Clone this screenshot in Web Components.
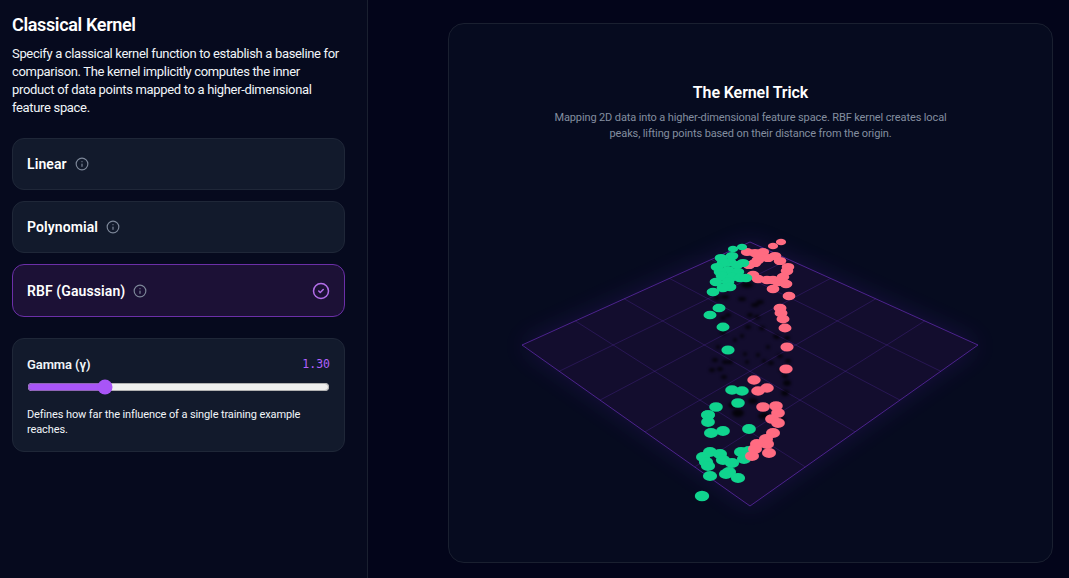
<!DOCTYPE html>
<html>
<head>
<meta charset="utf-8">
<title>Classical Kernel</title>
<style>
    html, body { margin: 0; height: 100%; background: #03051a; overflow: hidden; }
    body { font-family: Roboto, 'Noto Sans', sans-serif; color: #fff; }
</style>
</head>
<body>
<kernel-app>
    <kernel-sidebar slot="side" heading="Classical Kernel">
        <span slot="intro">Specify a classical kernel function to establish a baseline for comparison. The kernel implicitly computes the inner product of data points mapped to a higher-dimensional feature space.</span>
        <kernel-option label="Linear"></kernel-option>
        <kernel-option label="Polynomial"></kernel-option>
        <kernel-option label="RBF (Gaussian)" selected></kernel-option>
        <gamma-panel value="1.3">Defines how far the influence of a single training example reaches.</gamma-panel>
    </kernel-sidebar>
    <kernel-plot slot="main" heading="The Kernel Trick">Mapping 2D data into a higher-dimensional feature space. RBF kernel creates local peaks, lifting points based on their distance from the origin.</kernel-plot>
</kernel-app>
<script>
    class KernelApp extends HTMLElement {
        constructor() {
            super();
            this.root = this.attachShadow({ mode: 'open' });
            this.root.innerHTML = `
                <style>
                    :host { display: flex; height: 578px; width: 1069px; }
                    .side { flex: 0 0 367px; background: #060a1e; border-right: 1px solid #1a2030; }
                    .main { flex: 1; display: flex; justify-content: flex-end; padding: 23px 16px 15px 0; }
                </style>
                <div class="side"><slot name="side"></slot></div>
                <div class="main"><slot name="main"></slot></div>
            `;
        }
    }
    customElements.define('kernel-app', KernelApp);

    class KernelSidebar extends HTMLElement {
        constructor() {
            super();
            this.root = this.attachShadow({ mode: 'open' });
            this.root.innerHTML = `
                <style>
                    :host { display: block; padding: 13px 22px 0 12px; }
                    h2 { margin: 0 0 8px; font-size: 18px; line-height: 24px; font-weight: 600; letter-spacing: -0.35px; color: #fff; }
                    p { margin: 0 0 21px; max-width: 331px; font-size: 13px; line-height: 18px; letter-spacing: -0.33px; color: #f1f5f9; }
                    .list { display: flex; flex-direction: column; gap: 11px; }
                </style>
                <h2>${this.getAttribute('heading')}</h2>
                <p><slot name="intro"></slot></p>
                <div class="list"><slot></slot></div>
            `;
        }
    }
    customElements.define('kernel-sidebar', KernelSidebar);

    class KernelOption extends HTMLElement {
        constructor() {
            super();
            this.root = this.attachShadow({ mode: 'open' });
            const selected = this.hasAttribute('selected');
            this.root.innerHTML = `
                <style>
                    :host { display: flex; align-items: center; box-sizing: border-box; height: 52px; padding: 0 14px; border: 1px solid #1f2738; border-radius: 12px; background: #121a2c; }
                    :host([selected]) { height: 53px; background: #1c1136; border-color: #6b2fa8; }
                    .label { font-size: 14px; font-weight: 600; letter-spacing: 0.1px; color: #fff; }
                    .info { margin-left: 8px; display: block; color: #7d8799; }
                    .check { margin-left: auto; display: block; color: #b26ee8; }
                </style>
                <span class="label">${this.getAttribute('label')}</span>
                <svg class="info" width="14" height="14" viewBox="0 0 24 24" fill="none" stroke="currentColor" stroke-width="2" stroke-linecap="round"><circle cx="12" cy="12" r="10"/><path d="M12 16v-4M12 8h.01"/></svg>
                ${selected ? `<svg class="check" width="18" height="18" viewBox="0 0 24 24" fill="none" stroke="currentColor" stroke-width="2" stroke-linecap="round" stroke-linejoin="round"><circle cx="12" cy="12" r="10"/><path d="m9 12 2 2 4-4"/></svg>` : ''}
            `;
        }
    }
    customElements.define('kernel-option', KernelOption);

    class GammaPanel extends HTMLElement {
        constructor() {
            super();
            this.root = this.attachShadow({ mode: 'open' });
            const value = parseFloat(this.getAttribute('value'));
            this.root.innerHTML = `
                <style>
                    :host { display: block; box-sizing: border-box; height: 114px; margin-top: 10px; padding: 16px 14px 0; border: 1px solid #1f2738; border-radius: 12px; background: #121a2c; }
                    .head { display: flex; justify-content: space-between; align-items: center; height: 18px; }
                    .name { font-size: 13px; font-weight: 600; letter-spacing: -0.1px; color: #f1f5f9; }
                    .val { font-family: 'DejaVu Sans Mono', monospace; font-size: 11.5px; color: #b061ff; }
                    input { display: block; width: 100%; margin: 6px 0 12px; accent-color: #a855f7; height: 16px; }
                    p { margin: 0; font-size: 11px; line-height: 15px; letter-spacing: -0.11px; color: #f1f5f9; }
                </style>
                <div class="head"><span class="name">Gamma (γ)</span><span class="val">${value.toFixed(2)}</span></div>
                <input type="range" min="0.1" max="5" step="0.1" value="${value}" aria-label="Gamma">
                <p><slot></slot></p>
            `;
        }
    }
    customElements.define('gamma-panel', GammaPanel);

    // plane corners in svg space, h = homogeneous depth
    const corners = {
        top: [301, 218, 1.564], right: [529, 321, 1.282], bottom: [301, 482, 1], left: [73, 321, 1.282]
    };
    const project = (s, t) => {
        const { top, right, bottom, left } = corners;
        const weights = [[top, (1 - s) * (1 - t)], [right, s * (1 - t)], [bottom, s * t], [left, (1 - s) * t]];
        let x = 0, y = 0, w = 0;
        weights.forEach(([c, k]) => { x += c[0] * c[2] * k; y += c[1] * c[2] * k; w += c[2] * k; });
        return [x / w, y / w];
    };
    // dots are [x, y] in page pixels
    const GREEN = [[742,247],[733,249],[732,256],[721,258],[730,262],[723,263],[717,267],[743,263],[737,265],[728,270],[720,272],[738,272],[722,276],[732,277],[740,278],[716,282],[728,282],[746,278],[730,287],[723,288],[713,292],[719,308],[710,315],[723,327],[728,350],[732,390],[742,391],[738,403],[716,407],[708,415],[708,415],[708,422],[711,433],[723,431],[749,429],[710,452],[720,454],[703,457],[706,462],[723,460],[732,463],[708,466],[741,452],[749,451],[744,459],[729,472],[726,474],[710,476],[738,478],[702,496]];
    const RED = [[781,242],[773,246],[747,252],[755,253],[763,252],[760,255],[768,258],[775,256],[780,261],[758,260],[755,263],[749,265],[788,267],[787,271],[783,277],[778,282],[786,284],[753,275],[758,279],[767,280],[773,280],[773,289],[789,296],[780,308],[781,313],[783,319],[785,328],[787,347],[786,369],[754,380],[758,391],[767,388],[763,407],[776,406],[778,413],[772,419],[778,423],[773,433],[767,444],[766,439],[757,444],[755,449],[752,456],[769,453]];
    const SHADOWS = [[747,285,6,3],[725,297,4,2],[742,299,4,2],[760,302,4,2],[755,305,4,2],[717,298,3,2],[728,315,3,2],[723,318,3,2],[750,315,3,2],[757,317,3,2],[748,327,3,2],[762,328,3,2],[777,337,3,2],[723,333,3,2],[787,338,3,2],[742,336,2,2],[735,340,2,2],[775,336,2,2],[718,347,2,2],[768,347,2,2],[745,354,2,2],[758,355,2,2],[780,356,3,2],[715,360,3,2],[725,362,3,2],[730,362,3,2],[747,362,2,2],[764,361,2,2],[771,363,3,2],[788,361,3,2],[712,370,3,2],[720,369,3,2],[724,377,3,2],[782,370,3,2],[785,376,3,2],[787,383,4,3],[785,393,4,3],[753,401,5,3],[733,405,5,3],[738,413,5,4],[763,416,5,3],[780,420,5,3],[738,413,6,4],[765,415,4,3],[778,420,4,3]];

    class KernelPlot extends HTMLElement {
        constructor() {
            super();
            this.root = this.attachShadow({ mode: 'open' });
            this.render();
        }
        planeMarkup() {
            const { top, right, bottom, left } = corners;
            const pts = [top, right, bottom, left].map(c => `${c[0]},${c[1]}`).join(' ');
            let grid = '';
            for (let i = 1; i < 5; i++) {
                const a = project(i / 5, 0), b = project(i / 5, 1), c = project(0, i / 5), d = project(1, i / 5);
                grid += `<line x1="${a[0]}" y1="${a[1]}" x2="${b[0]}" y2="${b[1]}"/><line x1="${c[0]}" y1="${c[1]}" x2="${d[0]}" y2="${d[1]}"/>`;
            }
            return `
                <polygon points="${pts}" fill="#5b21b6" opacity=".22" filter="url(#glow)"/>
                <polygon points="${pts}" fill="#130d2e"/>
                <g stroke="#7c3aed" stroke-opacity=".2" stroke-width="1">${grid}</g>
                <polygon points="${pts}" fill="none" stroke="#6d2fc0" stroke-opacity=".65" stroke-width="1"/>
            `;
        }
        dotsMarkup() {
            // svg origin sits at 449,24 on the page
            const dot = (fill) => ([x, y]) => {
                const f = (y - 242) / 254;
                // the far ones at the very top shrink a bit
                const far = y < 250 ? 0.82 : 1;
                const rx = (6.2 + 1 * f) * far;
                const ry = (4 + 1.2 * f) * far;
                return `<ellipse cx="${x - 449}" cy="${y - 24}" rx="${rx.toFixed(1)}" ry="${ry.toFixed(1)}" fill="${fill}"/>`;
            };
            const shadows = SHADOWS.map(([x, y, rx, ry]) => `<ellipse cx="${x - 449}" cy="${y - 24}" rx="${rx}" ry="${ry}"/>`).join('');
            // green sits over red in the upper bunch, under it in the lower one
            return `
                <g fill="#000" opacity=".75" filter="url(#soft)">${shadows}</g>
                ${GREEN.filter(p => p[1] >= 300).map(dot('#10d48e')).join('')}
                ${RED.map(dot('#ff6b81')).join('')}
                ${GREEN.filter(p => p[1] < 300).map(dot('#10d48e')).join('')}
            `;
        }
        render() {
            this.root.innerHTML = `
                <style>
                    :host { display: block; box-sizing: border-box; width: 605px; height: 540px; position: relative; border: 1px solid #1a2030; border-radius: 16px; background: #060b1f; overflow: hidden; }
                    .copy { text-align: center; padding-top: 58px; position: relative; }
                    h3 { margin: 0 0 6px; font-size: 16px; line-height: 22px; font-weight: 600; letter-spacing: -0.1px; color: #fff; }
                    p { margin: 0 auto; width: 410px; font-size: 11px; line-height: 15.5px; letter-spacing: -0.12px; color: #838e9f; }
                    svg { position: absolute; left: 0; top: 0; }
                </style>
                <svg width="603" height="538" viewBox="0 0 603 538">
                    <defs>
                        <filter id="glow" x="-20%" y="-20%" width="140%" height="140%"><feGaussianBlur stdDeviation="12"/></filter>
                        <filter id="soft" x="-10%" y="-10%" width="120%" height="120%"><feGaussianBlur stdDeviation="1.4"/></filter>
                    </defs>
                    ${this.planeMarkup()}
                    ${this.dotsMarkup()}
                </svg>
                <div class="copy">
                    <h3>${this.getAttribute('heading')}</h3>
                    <p><slot></slot></p>
                </div>
            `;
        }
    }
    customElements.define('kernel-plot', KernelPlot);
</script>
</body>
</html>
